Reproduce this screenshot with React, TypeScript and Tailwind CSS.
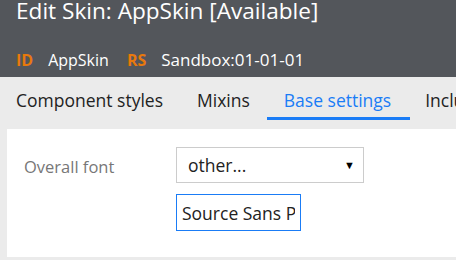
const tabs = ['Component styles', 'Mixins', 'Base settings', 'Included styles'];

export default function App() {
  return (
    <div className="w-[456px] h-[260px] overflow-hidden bg-[#ebebeb] font-['Open_Sans',sans-serif]">
      <div className="h-[77px] bg-[#53565b] px-4">
        <h1 className="text-[22.6px] leading-[22px] text-white whitespace-nowrap">
          Edit Skin: AppSkin [Available]
        </h1>
        <div className="mt-[28px] flex items-center text-[16px] leading-[20px] whitespace-nowrap">
          <span className="font-bold text-[#e8790c]">ID</span>
          <span className="ml-[15px] text-white">AppSkin</span>
          <span className="ml-[18px] font-bold text-[#e8790c]">RS</span>
          <span className="ml-[15px] text-[17px] text-white">Sandbox:01-01-01</span>
        </div>
      </div>

      <div className="flex h-[52px] pl-4 gap-[34px] whitespace-nowrap">
        {tabs.map((t) => (
          <div
            key={t}
            className={
              t === 'Base settings'
                ? 'relative pt-[10px] text-[17.5px] text-[#1a7cf6]'
                : 'pt-[10px] text-[17.5px] text-[#222]'
            }
          >
            {t}
            {t === 'Base settings' && (
              <div className="absolute left-[-17px] right-[-19px] top-[40px] h-[3px] bg-[#1a7cf6]" />
            )}
          </div>
        ))}
      </div>

      <div className="ml-[7px] h-[128px] bg-white">
        <div className="flex pt-[18px] pl-[17px]">
          <div className="w-[152px] pt-[8px] text-[16.5px] text-[#777]">Overall font</div>
          <div className="flex flex-col">
            <div className="flex h-[36px] w-[188px] items-center justify-between border border-[#cccccc] pl-[11px] pr-[8px] text-[17.5px] text-[#222]">
              <span>other...</span>
              <span className="text-[11px] text-black">▼</span>
            </div>
            <input
              readOnly
              value="Source Sans Pro"
              className="mt-[11px] h-[37px] w-[125px] border border-[#1a7cf6] pl-[5px] pr-[5px] text-[17.5px] text-[#222] outline-none"
            />
          </div>
        </div>
      </div>
    </div>
  );
}
